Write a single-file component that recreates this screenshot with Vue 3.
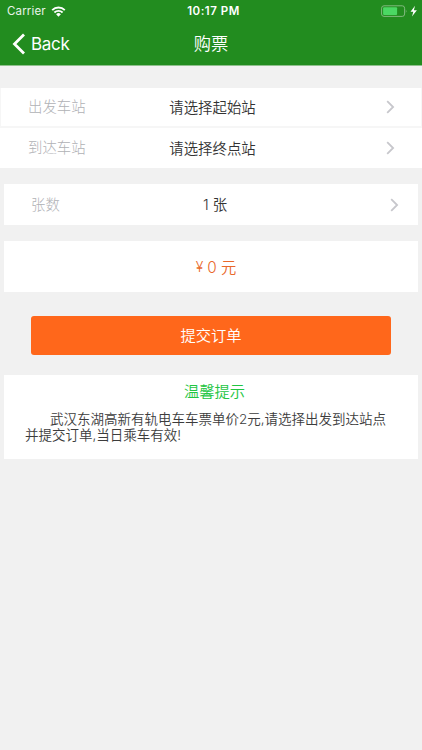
<script setup>
const stations = [
  { label: '出发车站', value: '请选择起始站' },
  { label: '到达车站', value: '请选择终点站' },
]
</script>

<template>
  <div class="screen">
    <header class="header">
      <div class="status">
        <div class="carrier">
          <span>Carrier</span>
          <svg class="wifi" width="15" height="11" viewBox="0 0 14 11">
            <path d="M.7 4.1a9 9 0 0 1 12.6 0" />
            <path d="M2.9 6.500a6 6 0 0 1 8.2 0" />
            <path class="dot" d="M4.6 8.200a3.5 3.5 0 0 1 4.8 0L7 10.700z" />
          </svg>
        </div>
        <span class="time">10:17 PM</span>
        <div class="power">
          <svg width="37" height="13" viewBox="0 0 37 13">
            <rect x=".6" y=".8" width="23" height="10.6" rx="2.4" fill="none" stroke="#81b97e" stroke-width="1" />
            <rect x="2.1" y="2.3" width="14" height="7.6" rx="1" fill="#4bd863" />
            <path d="M24.8 4.2q1.5 1.9 0 3.8z" fill="#81b97e" />
            <path d="M34 .8 29.500 6.800h2.8l-1.300 4.8L35.900 5.300h-3z" fill="#fff" />
          </svg>
        </div>
      </div>
      <nav class="nav">
        <div class="back">
          <svg width="14" height="22" viewBox="0 0 14 22"><path d="M12 1.500 2.500 11l9.500 9.500" /></svg>
          <span>Back</span>
        </div>
        <h1>购票</h1>
      </nav>
    </header>

    <section class="stations">
      <div v-for="s in stations" :key="s.label" class="row">
        <span class="label">{{ s.label }}</span>
        <span class="value">{{ s.value }}</span>
        <svg class="chevron" width="9" height="14" viewBox="0 0 9 14"><path d="m1.200 1.200 5.900 5.800-5.900 5.800" /></svg>
      </div>
    </section>

    <section class="row count">
      <span class="label">张数</span>
      <span class="value">1 张</span>
      <svg class="chevron" width="9" height="14" viewBox="0 0 9 14"><path d="m1.200 1.200 5.900 5.800-5.900 5.800" /></svg>
    </section>

    <section class="price"><span class="yen">¥</span><span>0 元</span></section>
    <button class="submit">提交订单</button>

    <section class="tips">
      <h2>温馨提示</h2>
      <p>武汉东湖高新有轨电车车票单价2元,请选择出发到达站点<br />并提交订单,当日乘车有效!</p>
    </section>
  </div>
</template>

<style>
body { background: #f1f1f1; }
</style>

<style scoped>
.screen {
  box-sizing: border-box;
  height: 750px;
  overflow: hidden;
  background: #f1f1f1;
  font-family: Inter, "Noto Sans CJK SC", sans-serif;
  font-weight: 350;
  color: #333;
}
.header { height: 65px; background: #228c1f; color: #fff; border-bottom: 1px solid #8fc08d; font-weight: 400; }
.status {
  display: grid;
  grid-template-columns: 1fr auto 1fr;
  align-items: center;
  height: 22px;
  padding: 0 4px 0 7px;
  font-size: 11.5px;
}
.carrier { display: flex; align-items: center; gap: 5px; letter-spacing: .15px; color: #e9f4e9; }
.wifi path { fill: none; stroke: #fff; stroke-width: 1.9; }
.wifi .dot { fill: #fff; stroke: none; }
.time { padding-left: 2px; font-weight: 600; letter-spacing: .5px; }
.power { display: flex; justify-content: flex-end; }
.nav { display: grid; grid-template-columns: 1fr auto 1fr; align-items: center; height: 43px; padding: 0 12px; }
.back { display: flex; align-items: center; gap: 5px; font-size: 17px; letter-spacing: -.3px; }
.back path { fill: none; stroke: #fff; stroke-width: 2.800; }
h1 { margin: 0; font-size: 17.300px; line-height: 24px; font-weight: 350; }
.stations { margin-top: 22px; }
.row {
  box-sizing: border-box;
  display: grid;
  grid-template-columns: 1fr auto 1fr;
  align-items: center;
  height: 40px;
  padding: 0 27px 0 28px;
  background: #fff;
  font-size: 14.400px;
  line-height: 20px;
}
.stations .row:first-child { height: 40px; border: 1px solid #f6f6f6; border-width: 0 1px 2px; padding: 0 26px 0 27px; }
.label { color: #b0b1b5; font-weight: 300; }
.stations .value { padding: 1px 0 0 2px; }
.chevron { justify-self: end; }
.chevron path { fill: none; stroke: #c7c7cc; stroke-width: 1.800; }
.count { height: 41px; margin: 16px 4px 0; padding: 0 19px 0 27px; }
.price {
  box-sizing: border-box;
  display: flex;
  align-items: center;
  justify-content: center;
  gap: 4px;
  height: 51px;
  margin: 16px 4px 0;
  padding: 0 0 1px 10px;
  background: #fff;
  color: #e9682a;
  font-size: 15.300px;
}
.yen { font-size: 14px; }
.submit {
  display: block;
  width: 360px;
  height: 39px;
  margin: 24px auto 0 31px;
  padding: 0 0 3px;
  border: 0;
  border-radius: 3px;
  background: #ff671b;
  color: #fff;
  font: 350 15.300px/22px "Noto Sans CJK SC", sans-serif;
}
.tips { box-sizing: border-box; height: 84px; margin: 20px 4px 0; padding: 6px 21px 0; background: #fff; }
h2 { margin: 0; padding-left: 7px; text-align: center; font-size: 15.300px; line-height: 22px; font-weight: 350; color: #22c542; }
p { margin: 9px 0 0; font-size: 13.500px; line-height: 15.500px; text-indent: 25px; white-space: nowrap; color: #3c3c3c; }
</style>
